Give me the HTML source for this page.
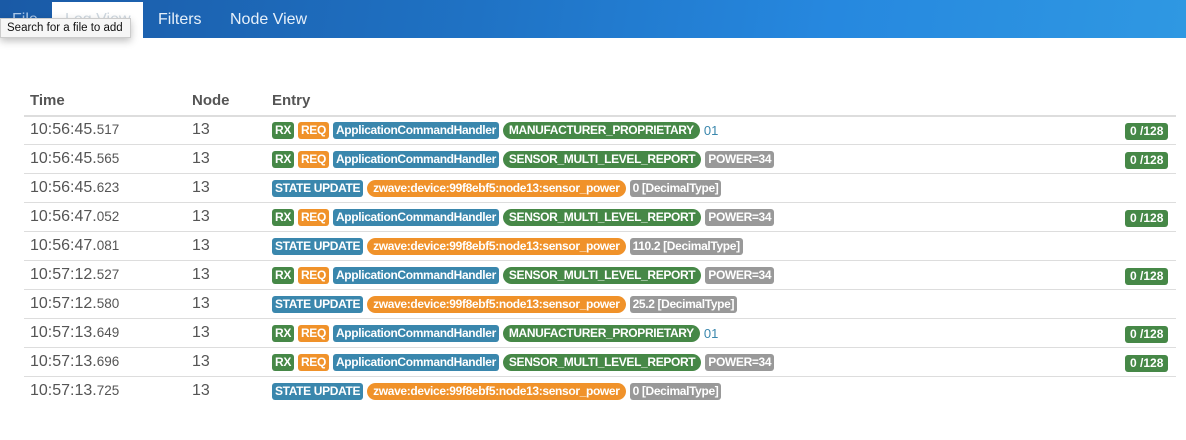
<!DOCTYPE html>
<html><head><style>
*{margin:0;padding:0;box-sizing:border-box}
body{width:1186px;height:440px;background:#fff;font-family:"Liberation Sans",sans-serif;position:relative;overflow:hidden}
.bar{position:absolute;left:0;top:0;width:1186px;height:38px;background:linear-gradient(100deg,#1a5aa6 0%,#1f72c4 40%,#2688df 70%,#2f98e2 100%)}
.tab{position:absolute;top:11px;color:#e6f0fa;font-size:16px}
.active{position:absolute;left:52px;top:2px;width:91px;height:36px;background:#fff}
.tip{position:absolute;left:0;top:18px;width:131px;height:20px;background:#f6f6f6;border:1px solid #ccc;box-shadow:0 3px 8px rgba(0,0,0,.25);font-size:11.5px;color:#111;padding:3px 0 0 6px;white-space:nowrap}
.h{position:absolute;top:92px;font-weight:bold;font-size:15px;color:#555}
.line{position:absolute;left:24px;width:1152px;height:1px;background:#ddd}
.row{position:absolute;left:0;width:1186px;height:29px}
.t{position:absolute;left:30px;top:5px;font-size:16px;color:#555}
.t small{font-size:13.5px}
.n{position:absolute;left:192px;top:5px;font-size:16px;color:#555}
.e{position:absolute;left:272px;top:6px;display:flex;align-items:center;white-space:nowrap}
.b{display:inline-block;height:17px;line-height:17px;font-size:12px;letter-spacing:-0.35px;font-weight:bold;color:#fff;padding:0 3px;border-radius:3px;margin-right:4px}
.g{background:#468847}.o{background:#f0922a}.bl{background:#3a87ad}.gr{background:#999}
.p{border-radius:9px;padding:0 6px}
.num{color:#3a87ad;font-size:13px;margin-left:0}
.r{position:absolute;left:1125px;top:6px}
.r .b{padding:0 5px;letter-spacing:0}
</style></head><body>
<div class="bar"></div>
<div class="active"></div>
<div class="tab" style="left:12px;color:#aac8ea">File</div>
<div class="tab" style="left:65px;color:#cfd8e0">Log View</div>
<div class="tab" style="left:158px">Filters</div>
<div class="tab" style="left:230px">Node View</div>
<div class="tip">Search for a file to add</div>
<div class="h" style="left:30px">Time</div>
<div class="h" style="left:192px">Node</div>
<div class="h" style="left:272px">Entry</div>
<div class="line" style="top:115px;height:2px"></div>

<div class="row" style="top:116px"><div class="t">10:56:45.<small>517</small></div><div class="n">13</div><div class="e"><span class="b g">RX</span><span class="b o">REQ</span><span class="b bl">ApplicationCommandHandler</span><span class="b g p">MANUFACTURER_PROPRIETARY</span><span class="num">01</span></div><div class="r"><span class="b g">0 /128</span></div></div>
<div class="line" style="top:144px"></div>
<div class="row" style="top:145px"><div class="t">10:56:45.<small>565</small></div><div class="n">13</div><div class="e"><span class="b g">RX</span><span class="b o">REQ</span><span class="b bl">ApplicationCommandHandler</span><span class="b g p">SENSOR_MULTI_LEVEL_REPORT</span><span class="b gr">POWER=34</span></div><div class="r"><span class="b g">0 /128</span></div></div>
<div class="line" style="top:173px"></div>
<div class="row" style="top:174px"><div class="t">10:56:45.<small>623</small></div><div class="n">13</div><div class="e"><span class="b bl">STATE UPDATE</span><span class="b o p">zwave:device:99f8ebf5:node13:sensor_power</span><span class="b gr">0 [DecimalType]</span></div></div>
<div class="line" style="top:202px"></div>
<div class="row" style="top:203px"><div class="t">10:56:47.<small>052</small></div><div class="n">13</div><div class="e"><span class="b g">RX</span><span class="b o">REQ</span><span class="b bl">ApplicationCommandHandler</span><span class="b g p">SENSOR_MULTI_LEVEL_REPORT</span><span class="b gr">POWER=34</span></div><div class="r"><span class="b g">0 /128</span></div></div>
<div class="line" style="top:231px"></div>
<div class="row" style="top:232px"><div class="t">10:56:47.<small>081</small></div><div class="n">13</div><div class="e"><span class="b bl">STATE UPDATE</span><span class="b o p">zwave:device:99f8ebf5:node13:sensor_power</span><span class="b gr">110.2 [DecimalType]</span></div></div>
<div class="line" style="top:260px"></div>
<div class="row" style="top:261px"><div class="t">10:57:12.<small>527</small></div><div class="n">13</div><div class="e"><span class="b g">RX</span><span class="b o">REQ</span><span class="b bl">ApplicationCommandHandler</span><span class="b g p">SENSOR_MULTI_LEVEL_REPORT</span><span class="b gr">POWER=34</span></div><div class="r"><span class="b g">0 /128</span></div></div>
<div class="line" style="top:289px"></div>
<div class="row" style="top:290px"><div class="t">10:57:12.<small>580</small></div><div class="n">13</div><div class="e"><span class="b bl">STATE UPDATE</span><span class="b o p">zwave:device:99f8ebf5:node13:sensor_power</span><span class="b gr">25.2 [DecimalType]</span></div></div>
<div class="line" style="top:318px"></div>
<div class="row" style="top:319px"><div class="t">10:57:13.<small>649</small></div><div class="n">13</div><div class="e"><span class="b g">RX</span><span class="b o">REQ</span><span class="b bl">ApplicationCommandHandler</span><span class="b g p">MANUFACTURER_PROPRIETARY</span><span class="num">01</span></div><div class="r"><span class="b g">0 /128</span></div></div>
<div class="line" style="top:347px"></div>
<div class="row" style="top:348px"><div class="t">10:57:13.<small>696</small></div><div class="n">13</div><div class="e"><span class="b g">RX</span><span class="b o">REQ</span><span class="b bl">ApplicationCommandHandler</span><span class="b g p">SENSOR_MULTI_LEVEL_REPORT</span><span class="b gr">POWER=34</span></div><div class="r"><span class="b g">0 /128</span></div></div>
<div class="line" style="top:376px"></div>
<div class="row" style="top:377px"><div class="t">10:57:13.<small>725</small></div><div class="n">13</div><div class="e"><span class="b bl">STATE UPDATE</span><span class="b o p">zwave:device:99f8ebf5:node13:sensor_power</span><span class="b gr">0 [DecimalType]</span></div></div>
</body></html>
